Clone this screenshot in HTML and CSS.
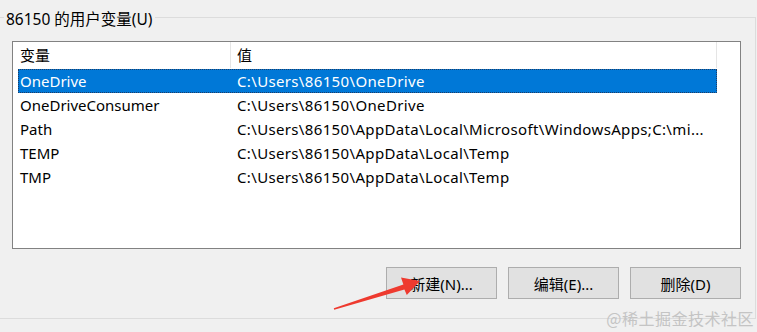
FILE: index.html
```html
<!DOCTYPE html>
<html lang="zh-CN">
<head>
  <meta charset="UTF-8">
  <title>用户变量</title>
  <link rel="stylesheet" href="styles.css">
</head>

<body>
  <fieldset class="group">
    <legend>86150 的用户变量(U)</legend>

    <div class="list">
      <div class="list-head">
        <div class="col-name">变量</div>
        <div class="col-value">值</div>
      </div>
      <ul class="rows">
        <li class="row selected"><span class="cell-name">OneDrive</span><span class="cell-value">C:\Users\86150\OneDrive</span></li>
        <li class="row"><span class="cell-name">OneDriveConsumer</span><span class="cell-value">C:\Users\86150\OneDrive</span></li>
        <li class="row"><span class="cell-name">Path</span><span class="cell-value">C:\Users\86150\AppData\Local\Microsoft\WindowsApps;C:\mi...</span></li>
        <li class="row"><span class="cell-name">TEMP</span><span class="cell-value">C:\Users\86150\AppData\Local\Temp</span></li>
        <li class="row"><span class="cell-name">TMP</span><span class="cell-value">C:\Users\86150\AppData\Local\Temp</span></li>
      </ul>
    </div>

    <div class="buttons">
      <button type="button">新建(N)...</button>
      <button type="button">编辑(E)...</button>
      <button type="button">删除(D)</button>
    </div>
  </fieldset>

  <!-- 截图上的标注箭头 -->
  <svg class="arrow" width="757" height="332" viewBox="0 0 757 332">
    <polygon fill="#ee3a2f" points="333.8,308.3 403.4,284.6 401.0,277.5 420,281 406.8,295.1 404.4,289.4 334.2,309.7"/>
  </svg>

  <div class="watermark">@稀土掘金技术社区</div>
</body>
</html>
```

FILE: styles.css
```css
html, body {
  margin: 0;
  height: 100%;
  overflow: hidden;
}
body {
  background: #f0f0f0;
  font-family: "Noto Sans", "Noto Sans CJK SC", sans-serif;
  font-size: 15px;
  color: #000;
  position: relative;
}

/* 分组框 */
.group {
  box-sizing: border-box;
  width: 766px;
  height: 314px;
  margin: 5px 0 0 -10px;
  padding: 0;
  border: 1px solid #dcdcdc;
}
.group legend {
  margin-left: 13px;
  padding: 4px 2px 0;
  line-height: 20px;
  font-size: 15.5px;
}

/* 变量列表 */
.list {
  box-sizing: border-box;
  width: 729px;
  height: 208px;
  margin: 12px 0 0 21px;
  background: #fff;
  border: 1px solid #828282;
}
.list-head {
  display: flex;
  height: 26px;
  line-height: 26px;
}
.col-name {
  width: 210px;
  padding-left: 7px;
  border-right: 1px solid #e5e5e5;
}
.col-value {
  width: 479px;
  padding-left: 6px;
  border-right: 1px solid #e5e5e5;
}
.rows {
  list-style: none;
  margin: 0;
  padding: 1px 0 0 5px;
}
.row {
  display: flex;
  width: 699px;
  height: 24px;
  line-height: 24px;
  white-space: nowrap;
}
.cell-name {
  width: 215px;
  padding-left: 2px;
}
.cell-value {
  padding-left: 2px;
  letter-spacing: 0.35px;
}
.row.selected {
  background: #0078d7;
  color: #fff;
  outline: 1px dotted #1d3c66;
  outline-offset: -1px;
}

/* 按钮 */
.buttons {
  display: flex;
  justify-content: flex-end;
  gap: 11px;
  width: 729px;
  margin: 18px 0 0 21px;
}
.buttons button {
  width: 111px;
  height: 32px;
  background: #e1e1e1;
  border: 1px solid #adadad;
  font-family: inherit;
  font-size: 15px;
  color: #000;
  padding: 0;
}

/* 标注 */
.arrow {
  position: absolute;
  left: 0;
  top: 0;
  pointer-events: none;
}
.watermark {
  position: absolute;
  right: 3px;
  top: 307px;
  font-family: "Noto Sans CJK SC", sans-serif;
  font-size: 16px;
  line-height: 22px;
  color: #c4c4c4;
  letter-spacing: 0.5px;
}
```
